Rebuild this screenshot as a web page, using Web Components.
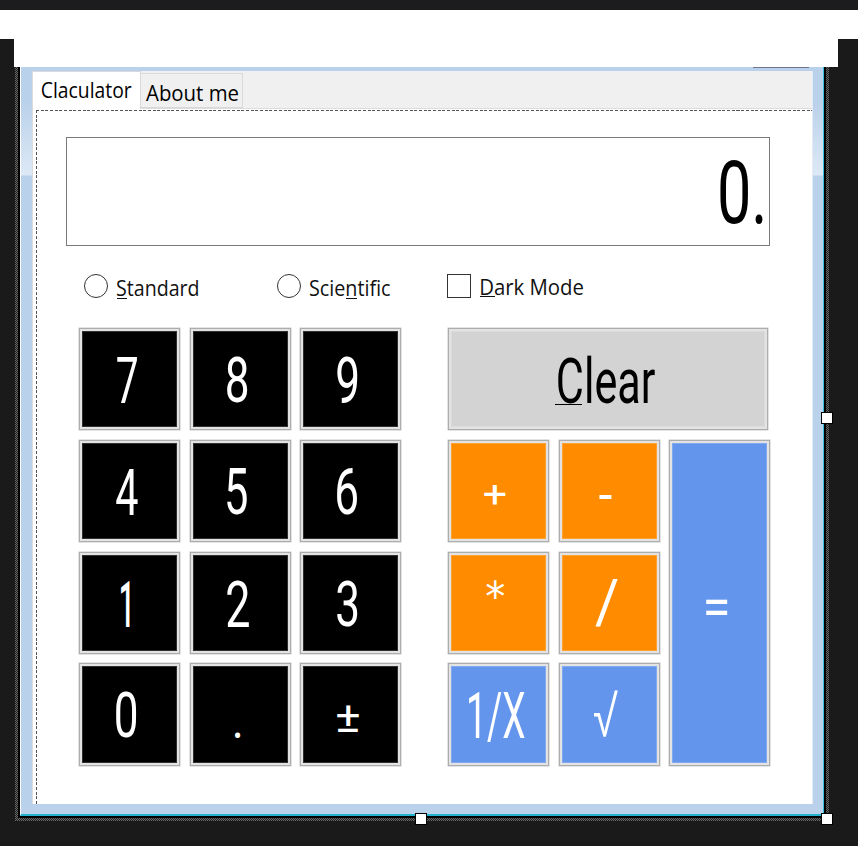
<!DOCTYPE html>
<html lang="en"><head><meta charset="utf-8"><title>Claculator</title>
<style>html,body{margin:0;background:#1a1a1a}body{width:858px;height:846px;overflow:hidden}</style></head>
<body>
<designer-surface>
<form-window>
<tab-strip slot="tabs"></tab-strip>
<calc-display></calc-display>
<mode-options></mode-options>
<key-pads></key-pads>
</form-window>
</designer-surface>
<script>
const define=(name,html)=>customElements.define(name,class extends HTMLElement{
  connectedCallback(){
    if(this.shadowRoot)return;
    const t=document.createElement('template');
    t.innerHTML='<style>*{box-sizing:border-box}:host{display:block;box-sizing:border-box}</style>'+html;
    this.attachShadow({mode:'open'}).append(t.content.cloneNode(true));
  }
});

// Text whose ink fills a w x h box; line="x y width" draws the mnemonic underline.
const faces={ui:'"Open Sans","Noto Sans",sans-serif',dejavu:'"DejaVu Sans",sans-serif',key:'Roboto,"Liberation Sans","DejaVu Sans",sans-serif'};
const pen=document.createElement('canvas').getContext('2d');
customElements.define('fit-text',class extends HTMLElement{
  connectedCallback(){
    if(this.shadowRoot)return;
    const a=n=>this.getAttribute(n), text=a('text'), w=+a('w'), h=+a('h');
    const family=faces[a('face')]||faces.key;
    const weight=a('weight')||400;
    pen.font=`${weight} 100px ${family}`;
    const m=pen.measureText(text), L=m.actualBoundingBoxLeft, R=m.actualBoundingBoxRight, A=m.actualBoundingBoxAscent, D=m.actualBoundingBoxDescent;
    const line=a('line')?a('line').split(' '):null;
    this.attachShadow({mode:'open'}).innerHTML=`<style>
      :host{display:block;position:relative;flex:none;width:${w}px;height:${h}px}
      svg{display:block;overflow:visible}
      text{font:${weight} 100px ${family};fill:currentColor}
      i{position:absolute;height:1px;background:currentColor}</style>
      <svg width="${w}" height="${h}" viewBox="${-L} ${-A} ${L+R} ${A+D}" preserveAspectRatio="none"><text x="0" y="0">${text}</text></svg>
      ${line?`<i style="left:${line[0]}px;top:${line[1]}px;width:${line[2]}px"></i>`:''}`;
  }
});

customElements.define('calc-key',class extends HTMLElement{
  connectedCallback(){
    if(this.shadowRoot)return;
    const [x,y,w,h]=this.getAttribute('ink').split(' ');
    const line=this.getAttribute('line');
    this.attachShadow({mode:'open'}).innerHTML=`<style>
      :host{display:flex;align-items:flex-start;box-sizing:border-box;border:1px solid #adadad;
        background:var(--key,#000);color:#fff;box-shadow:inset 0 0 0 2px #e3e3e3,inset 0 0 0 3px #ffffff30,0 0 0 .5px #c8c8c8;
        padding:${y-1}px 0 0 ${x-1}px}
      :host([kind=op]){--key:#ff8c00}
      :host([kind=fn]){--key:#6495ed}
      :host([kind=clear]){--key:#d3d3d3;color:#000}
      </style><fit-text face="${this.getAttribute('face')||'key'}" text="${this.getAttribute('label')}" w="${w}" h="${h}" weight="${this.getAttribute('weight')||400}" ${line?`line="${line}"`:''}></fit-text>`;
  }
});

define('designer-surface',`<style>
:host{width:858px;height:846px;background:#1a1a1a;display:grid;grid-template-rows:10px 29px 28px 1fr}
.top{background:#1c1b1d}.band{background:#fff}.band.short{margin:0 20px 0 14px}
.sel{position:relative;margin-left:15px;width:814px;height:754px;padding:0 3px 3px;
 background:repeating-conic-gradient(#686868 0 25%,#202020 0 50%) 0 0/2px 2px}
.black{background:#000;height:751px;padding:0 2px 2px 2px}
.h{position:absolute;width:12px;height:12px;background:#fff;border:1px solid #000}
</style><div class="top"></div><div class="band"></div><div class="band short"></div>
<div class="sel"><div class="black"><slot></slot></div>
<div class="h" style="left:806px;top:345px"></div><div class="h" style="left:400px;top:746px"></div><div class="h" style="left:806px;top:746px"></div></div>`);

define('form-window',`<style>
:host{position:relative;height:749px;padding:4px 10.5px 11px 11px;border-left:1px solid #fff;border-right:1px solid #35bfdc;border-bottom:2px solid #22b4cf;
 background:linear-gradient(#b9d1ea 0,#b9d1ea 35px,#dce8f5 106px,#dce8f5 108px,#b9d1ea 109px)}
.client{height:733px;background:#fff;border-left:1px solid #dcdcdc;border-right:1px solid #e4ebf4;display:flex;flex-direction:column}
.page{flex:1;margin:1px 0 0 3px;padding:27px 0 0 30px;
 background:repeating-linear-gradient(90deg,#555 0 3px,#fff 3px 4.67px) 0 0/100% 1px no-repeat,repeating-linear-gradient(#555 0 3px,#fff 3px 4.67px) 0 0/1px 100% no-repeat}
.close{position:absolute;left:732px;top:0;width:56px;height:1px;background:#73738d}
</style><div class="close"></div><div class="client"><slot name="tabs"></slot><div class="page"><slot></slot></div></div>`);

define('tab-strip',`<style>
:host{height:38px;background:#f0f0f0;border-bottom:1px solid #dcdcdc;display:flex;align-items:flex-end}
.tab{border:1px solid #d9d9d9}
.on{width:108px;height:38px;background:#fff;border-bottom:0;border-left:0;margin-bottom:-1px;padding:9.8px 0 0 8.5px}
.off{width:102px;height:35px;border-left:0;padding:10.5px 0 0 5px}
</style><div class="tab on"><fit-text face="ui" text="Claculator" w="89.5" h="16.3"></fit-text></div>
<div class="tab off"><fit-text face="ui" text="About me" w="92" h="16.3"></fit-text></div>`);

define('calc-display',`<style>
:host{width:704px;height:109px;border:1px solid #7a7a7a;background:#fff;display:flex;justify-content:flex-end;padding:21px 6.5px 0 0;color:#000}
</style><fit-text text="0." w="43" h="65"></fit-text>`);

define('mode-options',`<style>
:host{height:54px;margin:28px 0 0 17.5px;display:grid;grid-template-columns:193px 170px 1fr;color:#111}
label{display:flex;align-items:flex-start}
b{flex:none;width:24px;height:24px;border:1px solid #333;background:#fff;margin-right:9.5px}
.r{border-radius:50%}fit-text{margin-top:5.5px}label:last-child fit-text{margin:5px 0 0 .5px}
</style><label><b class="r"></b><fit-text face="ui" text="Standard" w="81" h="16.7" line="0 18 10"></fit-text></label>
<label><b class="r"></b><fit-text face="ui" text="Scientific" w="80" h="16.7" line="36 18 11"></fit-text></label>
<label><b></b><fit-text face="ui" text="Dark Mode" w="102" h="16.3" line="-1 17 15"></fit-text></label>`);

define('key-pads',`<style>
:host{display:flex;margin-left:13px;gap:46.5px}
.pad{display:grid;grid-template-columns:repeat(3,101.3px);grid-template-rows:repeat(4,102.3px);gap:9.5px 9.3px}
.eq{grid-column:3;grid-row:2/5}.ops calc-key[kind=clear]{grid-column:1/4;margin-right:2px}
</style>
<div class="pad">
<calc-key label="7" ink="37.7 28 20 47"></calc-key><calc-key label="8" ink="37.3 28 20.3 47"></calc-key><calc-key label="9" ink="37 28 20.3 47"></calc-key>
<calc-key label="4" ink="37 28 21.5 47"></calc-key><calc-key label="5" ink="37.5 28 20 47"></calc-key><calc-key label="6" ink="37 28 20.3 47"></calc-key>
<calc-key label="1" ink="42 28 8.5 47" weight="500"></calc-key><calc-key label="2" ink="37 28 22 47"></calc-key><calc-key label="3" ink="37 28 20.3 47"></calc-key>
<calc-key label="0" ink="37 28 20.3 47"></calc-key><calc-key label="." ink="45.5 69.5 5.5 5.5"></calc-key><calc-key label="±" ink="37 43 22 26"></calc-key>
</div>
<div class="pad ops">
<calc-key kind="clear" label="Clear" ink="110.3 27 97 49" line="-3 49 27"></calc-key>
<calc-key kind="op" label="+" ink="36.5 44 21.5 20"></calc-key><calc-key kind="op" label="-" ink="40.5 54 12.5 4.3"></calc-key>
<calc-key kind="fn" class="eq" label="=" ink="36.8 160 21.5 15"></calc-key>
<calc-key kind="op" label="*" ink="38 28 18.5 19" face="dejavu"></calc-key><calc-key kind="op" label="/" ink="36.5 28 23 47"></calc-key>
<calc-key kind="fn" label="1/X" ink="21.3 28 56 51"></calc-key><calc-key kind="fn" label="√" ink="35.5 28 24 47" weight="300"></calc-key>
</div>`);
</script></body></html>
